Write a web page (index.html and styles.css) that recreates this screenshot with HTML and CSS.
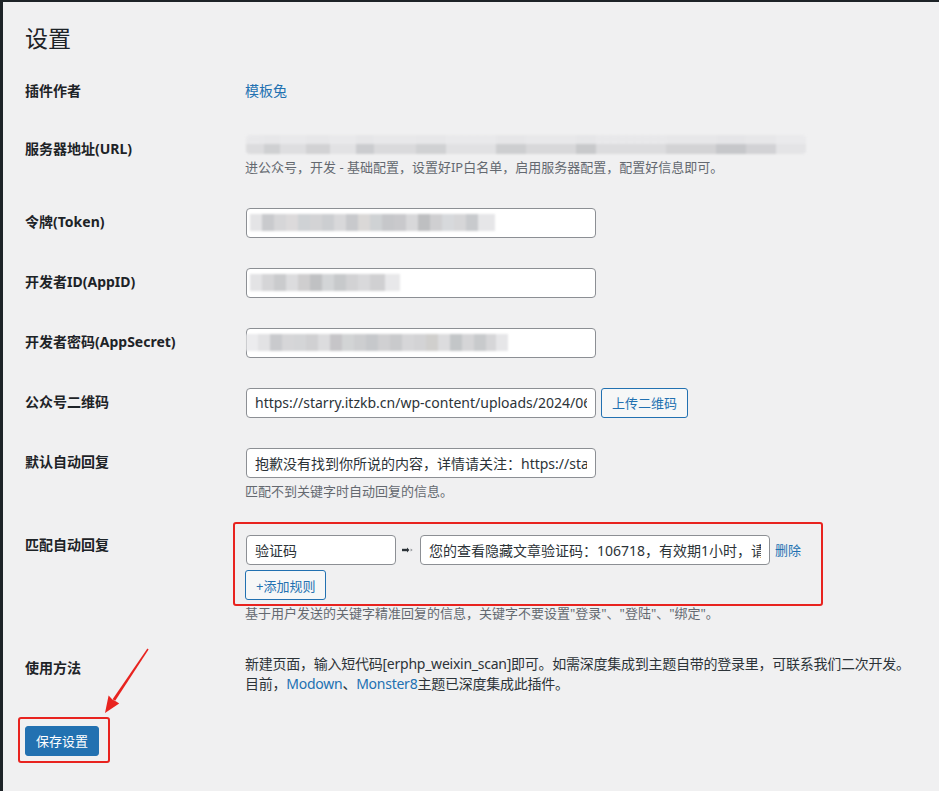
FILE: index.html
```html
<!DOCTYPE html>
<html lang="zh-CN">
<head>
    <meta charset="UTF-8">
    <meta name="viewport" content="width=device-width, initial-scale=1.0">
    <title>设置</title>
    <link rel="stylesheet" href="styles.css">
</head>
<body>
    <div class="wrap">
        <h1>设置</h1>

        <table class="form-table">
            <tr>
                <th>插件作者</th>
                <td class="plain"><a href="#">模板兔</a></td>
            </tr>
            <tr>
                <th>服务器地址(URL)</th>
                <td>
                    <div class="blur blur-url"></div>
                    <p class="description">进公众号，开发 - 基础配置，设置好IP白名单，启用服务器配置，配置好信息即可。</p>
                </td>
            </tr>
            <tr>
                <th>令牌(Token)</th>
                <td><div class="input"><span class="blur blur-token"></span></div></td>
            </tr>
            <tr>
                <th>开发者ID(AppID)</th>
                <td><div class="input"><span class="blur blur-id"></span></div></td>
            </tr>
            <tr>
                <th>开发者密码(AppSecret)</th>
                <td><div class="input"><span class="blur blur-secret"></span></div></td>
            </tr>
            <tr>
                <th>公众号二维码</th>
                <td>
                    <div class="field">
                        <input type="text" class="regular-text" value="https://starry.itzkb.cn/wp-content/uploads/2024/06/1718868830-qrcode.jpg">
                        <button class="button">上传二维码</button>
                    </div>
                </td>
            </tr>
            <tr>
                <th>默认自动回复</th>
                <td>
                    <input type="text" class="regular-text" value="抱歉没有找到你所说的内容，详情请关注：https://starry.itzkb.cn">
                    <p class="description">匹配不到关键字时自动回复的信息。</p>
                </td>
            </tr>
            <tr>
                <th>匹配自动回复</th>
                <td class="rules-cell">
                    <div class="rules">
                        <div class="rule">
                            <input type="text" class="keyword" value="验证码">
                            <svg class="rule-arrow" width="11" height="6" viewBox="0 0 11 6">
                                <rect x="0" y="1.8" width="5" height="2.4" fill="#2c3338"/>
                                <polygon points="5,0.6 7.4,3 5,5.4" fill="#2c3338"/>
                                <polygon points="8.6,1.6 10.6,3 8.6,4.4" fill="#8c8f94"/>
                            </svg>
                            <input type="text" class="regular-text" value="您的查看隐藏文章验证码：106718，有效期1小时，请尽快使用。">
                            <a href="#" class="remove">删除</a>
                        </div>
                        <button class="button">+添加规则</button>
                    </div>
                    <p class="description">基于用户发送的关键字精准回复的信息，关键字不要设置"登录"、"登陆"、"绑定"。</p>
                </td>
            </tr>
            <tr>
                <th>使用方法</th>
                <td>
                    <p class="usage">新建页面，输入短代码[erphp_weixin_scan]即可。如需深度集成到主题自带的登录里，可联系我们二次开发。<br>目前，<a href="#">Modown</a>、<a href="#">Monster8</a>主题已深度集成此插件。</p>
                </td>
            </tr>
        </table>

        <div class="submit">
            <span class="save-mark">
                <button class="button-primary">保存设置</button>
            </span>
        </div>

        <!-- 标注箭头 -->
        <svg class="mark-arrow" width="56" height="80" viewBox="0 0 56 80">
            <polygon points="47.4,8.6 48.6,9.4 15.2,60.8 12.6,59.2" fill="#e8231f"/>
            <polygon points="5,73 8.6,55.6 12.4,59.4 16.6,61.8 19.2,63.4" fill="#e8231f"/>
        </svg>
    </div>
</body>
</html>
```

FILE: styles.css
```css
* {
    margin: 0;
    padding: 0;
    box-sizing: border-box;
}

body {
    background-color: #1d2327;
    font-family: "Segoe UI", "Noto Sans", "Noto Sans CJK SC", sans-serif;
    font-size: 14px;
    color: #1d2327;
}

.wrap {
    position: relative;
    margin: 2px 0 0 3px;
    padding-left: 22px;
    min-height: 789px;
    background-color: #f0f0f1;
}

h1 {
    font-size: 23px;
    font-weight: 400;
    line-height: 30px;
    padding-top: 21px;
    margin-bottom: 9px;
}

a {
    color: #2271b1;
    text-decoration: none;
}

.form-table {
    width: 100%;
    border-collapse: collapse;
}

.form-table th {
    width: 210px;
    padding: 20px 10px 20px 0;
    text-align: left;
    vertical-align: top;
    font-size: 14px;
    font-weight: 700;
    line-height: 18px;
}

.form-table td {
    padding: 15px 10px;
    vertical-align: top;
    font-size: 14px;
    line-height: 18px;
}

.form-table td.plain {
    padding-top: 20px;
}

.description {
    margin-top: 4px;
    font-size: 13px;
    line-height: 19.5px;
    color: #646970;
}

input[type="text"],
.input {
    display: block;
    height: 30px;
    margin-left: 1px;
    padding: 0 8px;
    border: 1px solid #8c8f94;
    border-radius: 4px;
    background-color: #fff;
    font-family: inherit;
    font-size: 14px;
    color: #2c3338;
    outline: none;
}

.regular-text,
.input {
    width: 350px;
}

.input {
    display: flex;
    align-items: center;
    padding: 0 3px;
}

.field {
    display: flex;
    align-items: center;
    gap: 5px;
}

.button {
    height: 30px;
    padding: 0 10px;
    border: 1px solid #2271b1;
    border-radius: 3px;
    background-color: #f6f7f7;
    color: #2271b1;
    font-family: inherit;
    font-size: 13px;
    cursor: pointer;
}

.button-primary {
    height: 30px;
    padding: 0 10px;
    border: 1px solid #2271b1;
    border-radius: 3px;
    background-color: #2271b1;
    color: #fff;
    font-family: inherit;
    font-size: 13px;
    cursor: pointer;
}

/* 打码区域 */
.blur {
    display: block;
    filter: blur(1.2px);
}

.blur-url {
    width: 560px;
    height: 19px;
    margin-left: 1px;
    border-radius: 4px;
    background:
        linear-gradient(180deg, rgba(235, 235, 237, 0.85) 0 45%, transparent 45%),
        linear-gradient(90deg, #dcdcde 0 18px, #cfd0d2 18px 34px, #dedee0 34px 60px, #d2d2d4 60px 84px, #e2e2e4 84px 110px, #cbcccf 110px 128px, #dadadc 128px 170px, #d0d1d3 170px 200px, #e1e1e3 200px 250px, #cdced0 250px 280px, #d8d8da 280px 330px, #c8c9cb 330px 350px, #dcdcde 350px 420px, #d3d3d5 420px 470px, #c6c7ca 470px 500px, #d2d2d5 500px 530px, #e4e4e6 530px 560px);
}

.blur-token {
    width: 245px;
    height: 17px;
    background: linear-gradient(90deg, #e4e4e6 0 12px, #c9cacd 12px 24px, #d6d6d8 24px 36px, #dcdadb 36px 48px, #cfd2d5 48px 60px, #d3d3d5 60px 72px, #ccced1 72px 84px, #d8d8da 84px 96px, #c8c9cc 96px 108px, #dad8d7 108px 120px, #cfd2d4 120px 132px, #c6c7ca 132px 144px, #c9c9cc 144px 156px, #d8d8da 156px 168px, #bebfc1 168px 180px, #cfcfd1 180px 192px, #d7d9dc 192px 204px, #d6d6d8 204px 216px, #c8cacd 216px 228px, #e6e6e8 228px 245px);
}

.blur-id {
    width: 150px;
    height: 17px;
    background: linear-gradient(90deg, #e3e3e5 0 12px, #d5d5d7 12px 24px, #cacbcd 24px 36px, #dcdcde 36px 48px, #cfcecf 48px 60px, #c0c1c3 60px 72px, #d3d5d7 72px 84px, #c7c9cb 84px 96px, #d2d2d4 96px 108px, #d9d9db 108px 120px, #d0d0d2 120px 135px, #e8e8ea 135px 150px);
}

.blur-secret {
    width: 262px;
    height: 17px;
    margin-left: -4px;
    background: linear-gradient(90deg, #ececee 0 12px, #e2e2e4 12px 24px, #c9cacd 24px 36px, #d6d6d8 36px 48px, #d4d5d7 48px 60px, #d0d0d2 60px 72px, #dcdcde 72px 84px, #c6c5c8 84px 96px, #d2d4d5 96px 108px, #cdced0 108px 120px, #c6c8cb 120px 132px, #d0d0d2 132px 144px, #c9cacc 144px 156px, #d6d6d8 156px 168px, #d3d3d5 168px 180px, #d0cfcd 180px 192px, #dcdcde 192px 204px, #c3c6c8 204px 216px, #d5d5d7 216px 228px, #c8cacc 228px 240px, #d6d6d8 240px 250px, #e6e6e8 250px 262px);
}

/* 匹配规则 */
.rules-cell {
    padding-top: 19px !important;
}

.rules {
    position: relative;
    display: flex;
    flex-direction: column;
    align-items: flex-start;
    gap: 5px;
}

.rules::after {
    content: "";
    position: absolute;
    top: -13px;
    left: -12px;
    width: 590px;
    bottom: -6px;
    box-sizing: border-box;
    border: 2px solid #e8231f;
    border-radius: 3px;
    pointer-events: none;
}

.rule {
    display: flex;
    align-items: center;
}

.keyword {
    width: 150px;
}

.rule-arrow {
    margin: 0 6px 0 6px;
}

.remove {
    margin-left: 5px;
    font-size: 13px;
}

.usage {
    line-height: 20px;
    white-space: nowrap;
    letter-spacing: -0.25px;
    color: #2c3338;
}

/* 保存 */
.submit {
    padding-top: 17px;
}

.save-mark {
    position: relative;
    display: inline-block;
}

.save-mark::after {
    content: "";
    position: absolute;
    top: -9px;
    left: -7px;
    right: -11px;
    bottom: -7px;
    border: 2px solid #e8231f;
    border-radius: 3px;
}

.mark-arrow {
    position: absolute;
    left: 97px;
    top: 638px;
}
```
